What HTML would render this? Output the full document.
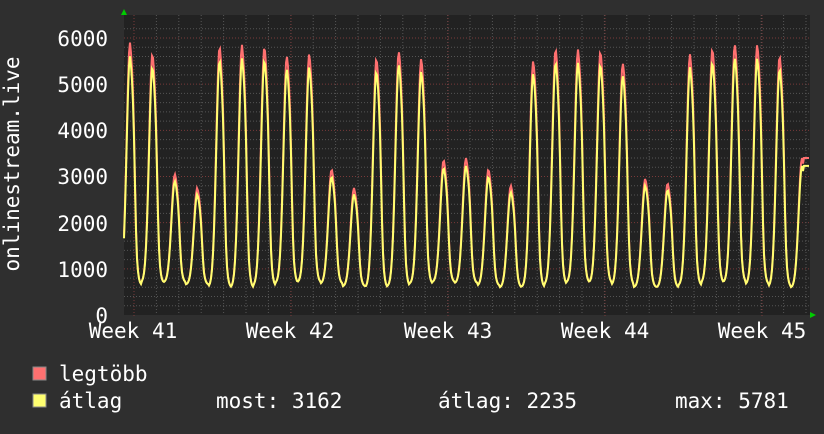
<!DOCTYPE html>
<html><head><meta charset="utf-8"><style>
body{margin:0;background:#2f2f2f;width:824px;height:430px;overflow:hidden;font-family:"DejaVu Sans Mono","Liberation Mono",monospace;color:#fff}
</style></head><body>
<svg id="s" width="824" height="430" xmlns="http://www.w3.org/2000/svg" font-family="DejaVu Sans Mono, Liberation Mono, monospace" font-size="21" fill="#fff">
<rect width="824" height="430" fill="#2f2f2f"/>
<rect x="124" y="15" width="686" height="300" fill="#222"/>
<g id="grid"></g>
<g id="lines"></g>
<polygon points="121,15 127,15 124,9" fill="#0c0"/>
<polygon points="810,312 810,318 816,315" fill="#0c0"/>
<g text-anchor="end">
<text x="108" y="46">6000</text><text x="108" y="92">5000</text><text x="108" y="138">4000</text>
<text x="108" y="184">3000</text><text x="108" y="231">2000</text><text x="108" y="277">1000</text><text x="108" y="323">0</text>
</g>
<text transform="translate(19,164) rotate(-90)" text-anchor="middle">onlinestream.live</text>
<g text-anchor="middle">
<text x="133" y="338">Week 41</text><text x="290" y="338">Week 42</text><text x="448" y="338">Week 43</text>
<text x="605" y="338">Week 44</text><text x="762" y="338">Week 45</text>
</g>
<rect x="33" y="367" width="13" height="13" fill="#ff7070" stroke="#888"/>
<rect x="33" y="394" width="13" height="13" fill="#ffff70" stroke="#888"/>
<text x="59" y="381">legtöbb</text>
<text x="59" y="408">átlag</text>
<text x="216" y="408">most: 3162</text>
<text x="438" y="408">átlag: 2235</text>
<text x="675" y="408">max: 5781</text>
</svg>
<script>
var NS="http://www.w3.org/2000/svg",g=document.getElementById('grid'),L=document.getElementById('lines');
function ln(x1,y1,x2,y2,c,p){var e=document.createElementNS(NS,'line');e.setAttribute('x1',x1);e.setAttribute('y1',y1);e.setAttribute('x2',x2);e.setAttribute('y2',y2);e.setAttribute('stroke',c);e.setAttribute('stroke-dasharray','1,2');p.appendChild(e);}
function Y(v){return 315-v*277/6000;}
for(var v=200;v<6400;v+=200){var y=Y(v);if(y<15)break;ln(124,y,810,y,v%1000==0?'#7a3a3a':'#555',g);}
for(var x=134-22.4*5;x<810;x+=22.4){if(x<124)continue;ln(x,15,x,315,'#555',g);}
[134,291,448,605,762].forEach(function(x){ln(x,15,x,318,'#7a3a3a',g);});
var P=[5900,5650,3050,2750,5800,5850,5800,5600,5650,3150,2750,5550,5700,5550,3350,3400,3150,2800,5500,5750,5750,5700,5450,2950,2850,5650,5750,5850,5850,5600,3400];
var x0=130;
function val(x,f){var d=(x-x0)/22.4,i=Math.round(d),ph=d-i;if(i<0)i=0;if(i>=P.length)i=P.length-1;
var pk=P[i]*f,mn=650+60*Math.sin(i);var s=Math.exp(-Math.pow(ph/0.19,2)*1.0);s=Math.pow(s,0.8);
var sh=0;if(ph>0.05&&ph<0.3)sh=0.15*Math.exp(-Math.pow((ph-0.17)/0.08,2));
return mn+(pk-mn)*Math.min(1,s+sh);}
function poly(f,c){var pts=[];for(var x=124;x<=809;x+=1){var v=val(x,f);if(x>=804)v=P[30]*f;pts.push(x+','+Y(v).toFixed(1));}
var e=document.createElementNS(NS,'polyline');e.setAttribute('points',pts.join(' '));e.setAttribute('fill','none');e.setAttribute('stroke',c);e.setAttribute('stroke-width','2');L.appendChild(e);}
poly(1,'#ff7070');poly(0.95,'#ffff70');
</script>
</body></html>
